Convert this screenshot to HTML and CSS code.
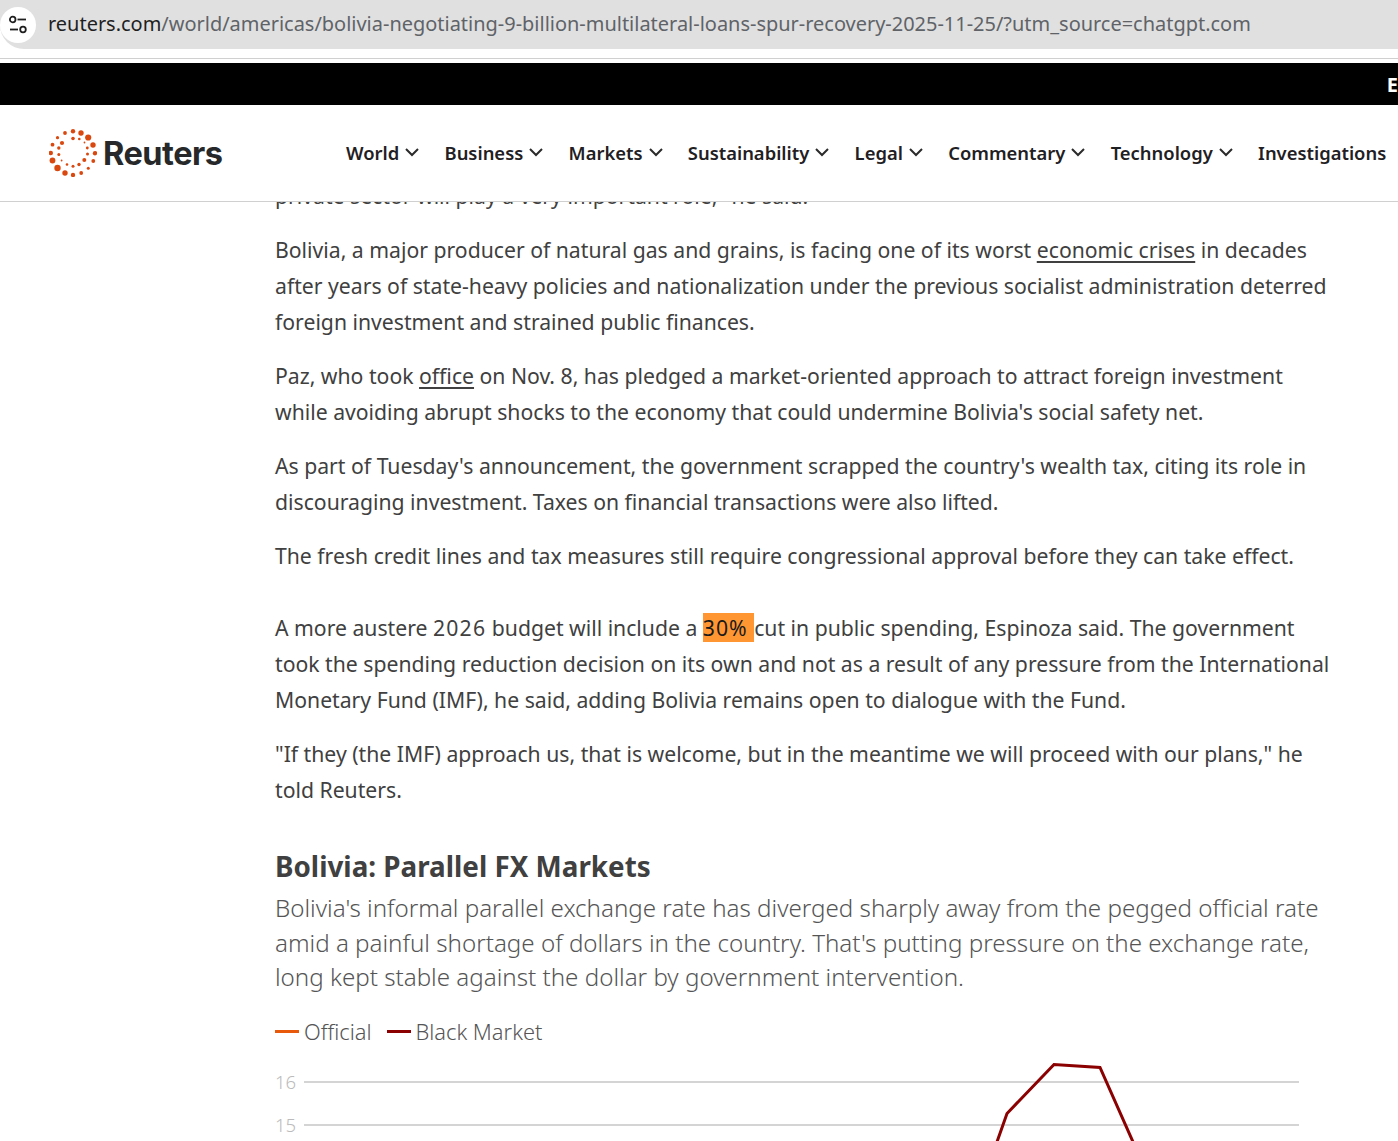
FILE: index.html
```html
<!DOCTYPE html>
<html lang="en">
<head>
<meta charset="utf-8">
<title>Reuters</title>
<link rel="stylesheet" href="styles.css">
</head>
<body>
<div class="urlbar">
  <span class="site-info">
    <svg width="22" height="22" viewBox="0 0 22 22" fill="none" stroke="#1f1f1f" stroke-width="1.8"><circle cx="5.7" cy="5.5" r="2.8"/><path d="M10.5 5.5h8.5"/><circle cx="16" cy="15.5" r="2.8"/><path d="M3 15.5h8"/></svg>
  </span>
  <span class="url"><span class="domain">reuters.com</span>/world/americas/bolivia-negotiating-9-billion-multilateral-loans-spur-recovery-2025-11-25/?utm_source=chatgpt.com</span>
</div>
<div class="divider"></div>
<div class="blackbar"><span class="edge">E</span></div>
<header class="site-header">
  <div class="brand">
    <svg class="logo" width="48" height="48" viewBox="0 0 48 48" fill="#d9480f">
      <circle cx="24" cy="2.2" r="2.2"/><circle cx="32" cy="4" r="2.7"/><circle cx="39.2" cy="8.5" r="3.1"/><circle cx="44" cy="16" r="2.7"/><circle cx="46" cy="24.2" r="2.2"/><circle cx="44.3" cy="32" r="1.9"/><circle cx="39.3" cy="39.2" r="1.5"/><circle cx="32.2" cy="44" r="1.9"/><circle cx="24" cy="46" r="2.2"/><circle cx="16" cy="44" r="2.7"/><circle cx="8.5" cy="39" r="3.2"/><circle cx="3.5" cy="31.5" r="2.9"/><circle cx="1.8" cy="24" r="2.2"/><circle cx="3.5" cy="15.7" r="1.9"/><circle cx="8.5" cy="8.7" r="1.6"/><circle cx="16" cy="4" r="1.9"/>
      <circle cx="24" cy="9.5" r="1.8"/><circle cx="30.3" cy="10" r="1.3"/><circle cx="35.5" cy="13.5" r=".9"/><circle cx="38.3" cy="19" r="1.4"/><circle cx="38.5" cy="25" r="1.5"/><circle cx="35.3" cy="31" r="2"/><circle cx="30" cy="35.5" r="1.7"/><circle cx="24" cy="37.2" r="1.5"/><circle cx="18" cy="35.5" r="1.3"/><circle cx="12.6" cy="31.5" r=".9"/><circle cx="9.8" cy="25.5" r="1.5"/><circle cx="9.8" cy="19" r="1.7"/><circle cx="13" cy="14" r="2.1"/>
    </svg>
    <span class="wordmark">Reuters</span>
  </div>
  <nav class="nav">
    <a class="nav-item">World<svg class="chev" width="14" height="9" viewBox="0 0 14 9"><path d="M1 1l6 6 6-6"/></svg></a>
    <a class="nav-item">Business<svg class="chev" width="14" height="9" viewBox="0 0 14 9"><path d="M1 1l6 6 6-6"/></svg></a>
    <a class="nav-item">Markets<svg class="chev" width="14" height="9" viewBox="0 0 14 9"><path d="M1 1l6 6 6-6"/></svg></a>
    <a class="nav-item">Sustainability<svg class="chev" width="14" height="9" viewBox="0 0 14 9"><path d="M1 1l6 6 6-6"/></svg></a>
    <a class="nav-item">Legal<svg class="chev" width="14" height="9" viewBox="0 0 14 9"><path d="M1 1l6 6 6-6"/></svg></a>
    <a class="nav-item">Commentary<svg class="chev" width="14" height="9" viewBox="0 0 14 9"><path d="M1 1l6 6 6-6"/></svg></a>
    <a class="nav-item">Technology<svg class="chev" width="14" height="9" viewBox="0 0 14 9"><path d="M1 1l6 6 6-6"/></svg></a>
    <a class="nav-item">Investigations</a>
  </nav>
</header>
<main class="article">
  <p>private sector will play a very important role," he said.</p>
  <p>Bolivia, a major producer of natural gas and grains, is facing one of its worst <a class="link">economic crises</a> in decades after years of state-heavy policies and nationalization under the previous socialist administration deterred foreign investment and strained public finances.</p>
  <p>Paz, who took <a class="link">office</a> on Nov. 8, has pledged a market-oriented approach to attract foreign investment while avoiding abrupt shocks to the economy that could undermine Bolivia's social safety net.</p>
  <p>As part of Tuesday's announcement, the government scrapped the country's wealth tax, citing its role in discouraging investment. Taxes on financial transactions were also lifted.</p>
  <p class="gap-after">The fresh credit lines and tax measures still require congressional approval before they can take effect.</p>
  <p>A more austere <span class="num">2026</span> budget will include a <mark class="hit">30% </mark>cut in public spending, Espinoza said. The government took the spending reduction decision on its own and not as a result of any pressure from the International Monetary Fund (IMF), he said, adding Bolivia remains open to dialogue with the Fund.</p>
  <p>"If they (the IMF) approach us, that is welcome, but in the meantime we will proceed with our plans," he told Reuters.</p>
  <section class="chart">
    <h2 class="chart-title">Bolivia: Parallel FX Markets</h2>
    <p class="chart-desc">Bolivia's informal parallel exchange rate has diverged sharply away from the pegged official rate amid a painful shortage of dollars in the country. That's putting pressure on the exchange rate, long kept stable against the dollar by government intervention.</p>
    <div class="legend">
      <span class="key key-official">Official</span>
      <span class="key key-black">Black Market</span>
    </div>
    <div class="plot">
      <div class="tick"><span class="tick-label">16</span><span class="tick-line"></span></div>
      <div class="tick"><span class="tick-label">15</span><span class="tick-line"></span></div>
      <svg class="series" width="1024" height="90" viewBox="0 0 1024 90" fill="none"><path d="M721.6 90L732 60.5 779 11.5 825 14.5 858.5 90" stroke="#8b0000" stroke-width="3"/></svg>
    </div>
  </section>
</main>
</body>
</html>
```
FILE: styles.css
```css
* { box-sizing: border-box; }
html, body { margin: 0; height: 1141px; overflow: hidden; }
body { background: #fff; font-family: "Noto Sans", sans-serif; color: #404040; }
.urlbar { height: 49px; background: #e0e0e0; border-radius: 0 0 0 24px; display: flex; align-items: center; gap: 12px; }
.site-info { width: 36px; height: 36px; background: #fff; border-radius: 50%; display: flex; align-items: center; justify-content: center; }
.url { font-size: 19.97px; color: #5f6368; white-space: nowrap; margin-top: -3px; }
.domain { color: #1f1f1f; }
.divider { height: 10px; margin-bottom: 4px; border-bottom: 1px solid #d0d0d0; }
.blackbar { height: 42px; background: #000; display: flex; justify-content: flex-end; align-items: center; overflow: hidden; }
.edge { color: #fff; font-weight: 700; font-size: 20px; }
.site-header { position: relative; z-index: 2; height: 97px; background: #fff; border-bottom: 1px solid #d0d0d0; display: flex; align-items: center; padding-left: 49px; white-space: nowrap; }
.brand { display: flex; align-items: center; gap: 6px; width: 297px; }
.wordmark { font-family: Inter, sans-serif; font-weight: 700; font-size: 32.5px; letter-spacing: -0.5px; color: #26282a; }
.nav { display: flex; gap: 25.3px; margin-top: -2px; }
.nav-item { display: flex; align-items: center; gap: 6px; font-size: 18.4px; font-weight: 600; color: #1f2023; }
.chev { fill: none; stroke: #2b2b2b; stroke-width: 2; }
.article { margin-top: -24px; padding-left: 275px; width: 1332px; font-size: 21.2px; line-height: 36px; }
.article > p { margin: 0 0 18px; }
.article > p.gap-after { margin-bottom: 36px; }
.link { text-decoration: underline; text-underline-offset: 3px; }
.num { letter-spacing: 1.2px; }
.hit { background: #ff9632; color: #1a1a1a; letter-spacing: 1px; }
.chart { margin-top: 40px; }
.chart-title { margin: 0; font-size: 27.8px; line-height: 36px; font-weight: 700; color: #404040; }
.chart-desc { margin: 7px 0 0; font-size: 24.15px; line-height: 34.5px; font-weight: 300; color: #555; }
.legend { display: flex; gap: 15px; margin-top: 21px; font-size: 21.8px; line-height: 32px; font-weight: 300; color: #555; }
.key { display: flex; align-items: center; gap: 5px; }
.key::before { content: ""; width: 24px; height: 3px; }
.key-official::before { background: #e8590c; }
.key-black::before { background: #8b0000; }
.plot { position: relative; margin-top: 13px; height: 90px; }
.tick { display: flex; align-items: center; height: 43px; font-weight: 300; font-size: 18.5px; color: #bbb; }
.tick-label { width: 29px; }
.tick-line { width: 995px; height: 2px; background: #d4d4d4; }
.series { position: absolute; left: 0; top: -8px; }
```
